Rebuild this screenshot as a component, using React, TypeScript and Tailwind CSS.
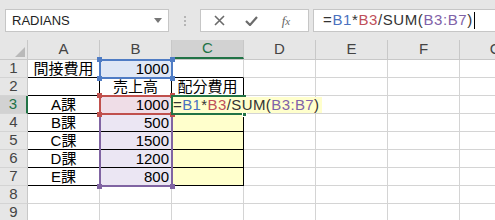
import React from "react";

type Cell = {
  text?: string;
  align?: "left" | "center" | "right";
  bg?: string;
  r?: boolean;
  b?: boolean;
};

const FONT = { fontFamily: '"Liberation Sans", "Noto Sans CJK JP", sans-serif' };

const cols = ["A", "B", "C", "D", "E", "F", "G"];

const rows: Record<number, Record<string, Cell>> = {
  1: {
    A: { text: "間接費用", align: "center", r: true, b: true },
    B: { text: "1000", align: "right", bg: "bg-[#dfe7f5]", b: true },
    C: { b: true },
  },
  2: {
    A: { r: true, b: true },
    B: { text: "売上高", align: "center", r: true, b: true },
    C: { text: "配分費用", align: "center", r: true, b: true },
  },
  3: {
    A: { text: "A課", align: "center", r: true, b: true },
    B: { text: "1000", align: "right", bg: "bg-[#efdde7]", r: true, b: true },
    C: { bg: "bg-[#ffffcc]", r: true, b: true },
  },
  4: {
    A: { text: "B課", align: "center", r: true, b: true },
    B: { text: "500", align: "right", bg: "bg-[#ebe6f3]", r: true, b: true },
    C: { bg: "bg-[#ffffcc]", r: true, b: true },
  },
  5: {
    A: { text: "C課", align: "center", r: true, b: true },
    B: { text: "1500", align: "right", bg: "bg-[#ebe6f3]", r: true, b: true },
    C: { bg: "bg-[#ffffcc]", r: true, b: true },
  },
  6: {
    A: { text: "D課", align: "center", r: true, b: true },
    B: { text: "1200", align: "right", bg: "bg-[#ebe6f3]", r: true, b: true },
    C: { bg: "bg-[#ffffcc]", r: true, b: true },
  },
  7: {
    A: { text: "E課", align: "center", r: true, b: true },
    B: { text: "800", align: "right", bg: "bg-[#ebe6f3]", r: true, b: true },
    C: { bg: "bg-[#ffffcc]", r: true, b: true },
  },
};

function Formula() {
  return (
    <>
      <span className="text-[#333]">=</span>
      <span className="text-[#4a72c0]">B1</span>
      <span className="text-[#333]">*</span>
      <span className="text-[#c0505a]">B3</span>
      <span className="text-[#333]">/SUM(</span>
      <span className="text-[#7f62a8]">B3:B7</span>
      <span className="text-[#333]">)</span>
    </>
  );
}

function RefBox({ cls, left, top, w, h, color }: { cls: string; left: number; top: number; w: number; h: number; color: string }) {
  const handles = [
    [left - 2, top - 2],
    [left + w - 3, top - 2],
    [left - 2, top + h - 3],
    [left + w - 3, top + h - 3],
  ];
  return (
    <>
      <div className={`absolute border-2 ${cls}`} style={{ left, top, width: w, height: h }} />
      {handles.map(([x, y], i) => (
        <div key={i} className="absolute w-[5px] h-[5px]" style={{ left: x, top: y, background: color }} />
      ))}
    </>
  );
}

function Toolbar() {
  return (
    <div className="h-[40px] bg-[#e6e6e6] flex items-start pt-[9px]">
      <div className="ml-[5px] w-[164px] h-[23px] bg-white border border-[#c6c6c6] flex items-center justify-between pl-[6px] pr-[6px]">
        <span className="text-[13px] text-[#222]" style={FONT}>RADIANS</span>
        <svg width="8" height="5" viewBox="0 0 8 5"><path d="M0 0h8L4 5z" fill="#777" /></svg>
      </div>
      <div className="w-[31px] h-[23px] flex flex-col items-center justify-center gap-[2px]">
        <div className="w-[2px] h-[2px] bg-[#b5b5b5]" />
        <div className="w-[2px] h-[2px] bg-[#b5b5b5]" />
        <div className="w-[2px] h-[2px] bg-[#b5b5b5]" />
      </div>
      <div className="w-[109px] h-[23px] bg-white border border-[#c6c6c6] flex items-center">
        <div className="w-[37px] flex justify-center">
          <svg width="11" height="11" viewBox="0 0 11 11"><path d="M1 1l9 9M10 1l-9 9" stroke="#6b6b6b" strokeWidth="1.6" /></svg>
        </div>
        <div className="w-[26px] flex justify-center">
          <svg width="13" height="10" viewBox="0 0 13 10"><path d="M1 5l4 4 7-8" stroke="#6b6b6b" strokeWidth="2.2" fill="none" /></svg>
        </div>
        <div className="flex-1 flex justify-center">
          <span className="text-[13px] italic text-[#666]" style={{ fontFamily: '"Liberation Serif", serif' }}>f<span className="text-[11px]">x</span></span>
        </div>
      </div>
      <div className="ml-[4px] flex-1 h-[23px] bg-white border border-[#c6c6c6] border-r-0 flex items-center pl-[9px]">
        <span className="text-[15px] tracking-[0.6px] whitespace-nowrap" style={FONT}><Formula /></span>
        <span className="w-[1px] h-[17px] bg-black ml-[1px]" />
      </div>
    </div>
  );
}

export default function App() {
  return (
    <div className="w-[495px] h-[220px] overflow-hidden bg-white" style={FONT}>
      <Toolbar />
      <div className="relative">
        <div className="flex h-[20px] bg-[#e6e6e6] border-b border-[#c8c8c8]">
          <div className="w-[28px] shrink-0 border-r border-[#c8c8c8] relative">
            <svg className="absolute left-[15px] top-[7px]" width="10" height="10" viewBox="0 0 10 10"><path d="M10 0V10H0z" fill="#b9b9b9" /></svg>
          </div>
          {cols.map((c) => (
            <div
              key={c}
              className={`w-[72px] shrink-0 border-r border-[#c8c8c8] flex items-center justify-center text-[15px] overflow-hidden ${
                c === "C" ? "bg-[#d2d2d2] text-[#217346] border-b-2 border-b-[#217346]" : "text-[#444]"
              }`}
            >
              {c}
            </div>
          ))}
        </div>
        {[1, 2, 3, 4, 5, 6, 7, 8, 9].map((r) => (
          <div key={r} className="flex h-[18px]">
            <div
              className={`w-[28px] shrink-0 border-b border-[#d4d4d4] flex items-center justify-center text-[15px] ${
                r === 3 ? "bg-[#d2d2d2] text-[#217346] border-r-2 border-r-[#217346]" : "bg-[#e6e6e6] text-[#444] border-r border-r-[#c8c8c8]"
              }`}
            >
              {r}
            </div>
            {cols.map((c) => {
              const cell = rows[r]?.[c] ?? {};
              const al = cell.align === "right" ? "justify-end pr-[2px]" : cell.align === "center" ? "justify-center" : "justify-start pl-[2px]";
              return (
                <div
                  key={c}
                  className={`w-[72px] shrink-0 border-r border-b flex items-center text-[15px] text-black leading-none ${al} ${cell.bg ?? ""} ${
                    cell.r ? "border-r-black" : "border-r-[#d4d4d4]"
                  } ${cell.b ? "border-b-black" : "border-b-[#d4d4d4]"}`}
                >
                  {cell.text}
                </div>
              );
            })}
          </div>
        ))}

        <RefBox cls="border-[#8064a2]" left={99} top={55} w={74} h={92} color="#8064a2" />
        <RefBox cls="border-[#c0504d]" left={99} top={55} w={74} h={20} color="#c0504d" />
        <RefBox cls="border-[#4f7cc4]" left={99} top={19} w={74} h={20} color="#4f7cc4" />

        <div className="absolute left-[171px] top-[55px] w-[75px] h-[20px] border-2 border-[#217346]" />
        <div className="absolute left-[242px] top-[72px] w-[5px] h-[5px] bg-[#217346] border border-white" />
        <div className="absolute left-[173px] top-[57px] h-[16px] pr-[2px] bg-[#ffffcc] flex items-center text-[15px] tracking-[0.4px] whitespace-nowrap">
          <Formula />
        </div>
      </div>
    </div>
  );
}
